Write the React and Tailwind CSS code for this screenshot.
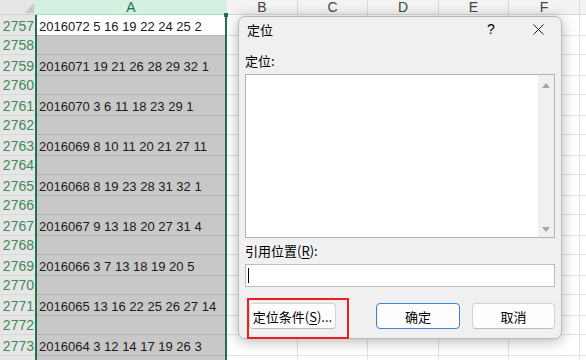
const rows = [
  { n: 2757, t: "2016072 5 16 19 22 24 25 2" },
  { n: 2758 },
  { n: 2759, t: "2016071 19 21 26 28 29 32 1" },
  { n: 2760 },
  { n: 2761, t: "2016070 3 6 11 18 23 29 1" },
  { n: 2762 },
  { n: 2763, t: "2016069 8 10 11 20 21 27 11" },
  { n: 2764 },
  { n: 2765, t: "2016068 8 19 23 28 31 32 1" },
  { n: 2766 },
  { n: 2767, t: "2016067 9 13 18 20 27 31 4" },
  { n: 2768 },
  { n: 2769, t: "2016066 3 7 13 18 19 20 5" },
  { n: 2770 },
  { n: 2771, t: "2016065 13 16 22 25 26 27 14" },
  { n: 2772 },
  { n: 2773, t: "2016064 3 12 14 17 19 26 3" },
  { n: 2774 },
];

const cols = [
  { l: "B", w: "w-[71px]" },
  { l: "C", w: "w-[70px]" },
  { l: "D", w: "w-[71px]" },
  { l: "E", w: "w-[70px]" },
  { l: "F", w: "w-[71px]" },
  { l: "", w: "w-[40px]" },
];

const rh = (r) => (r.t ? "h-[21px]" : "h-[19px]");

export default function App() {
  return (
    <div
      className="relative w-[586px] h-[360px] overflow-hidden bg-white text-[#1a1a1a]"
      style={{ fontFamily: '"Liberation Sans", Arial, sans-serif' }}
    >
      <div className="flex">
        {/* row headers */}
        <div className="flex flex-col w-[35px] shrink-0">
          <div className="relative h-[15px] bg-[#e6e6e6] border-b border-[#d0d0d0]">
            <svg className="absolute right-[1px] bottom-[1px]" width="9" height="10" viewBox="0 0 9 10">
              <polygon points="9,0 9,10 0,10" fill="#c8c8c8" />
            </svg>
          </div>
          {rows.map((r) => (
            <div
              key={r.n}
              className={`${rh(r)} flex items-end justify-end pr-[1px] pb-[1px] bg-[#e6e6e6] border-b border-[#d8d8d8] text-[14px] leading-[16px] text-[#3a8a5c]`}
            >
              {r.n}
            </div>
          ))}
        </div>

        {/* column A */}
        <div className="relative flex flex-col w-[192px] shrink-0">
          <div className="h-[15px] bg-[#d3f0e0] border-b border-[#a9d9bd] text-[#217346] text-[14px] leading-[15px] text-center">
            A
          </div>
          <div className="flex flex-col border-x-2 border-[#217346]">
            {rows.map((r, i) => (
              <div
                key={r.n}
                className={`${rh(r)} ${i === 0 ? "bg-white" : "bg-[#c8c8c8]"} border-b border-[#b4b4b4] flex items-end pl-[2px] pb-[1px] text-[13px] leading-[15px] whitespace-nowrap`}
              >
                {r.t}
              </div>
            ))}
          </div>
          <div className="absolute right-[-1px] top-[13px] w-[4px] h-[4px] bg-[#217346]" />
        </div>

        {/* other columns */}
        {cols.map((c, ci) => (
          <div key={ci} className={`flex flex-col ${c.w} shrink-0`}>
            <div className="h-[15px] bg-[#f3f3f3] border-b border-r border-[#d9d9d9] text-[#444] text-[14px] leading-[15px] text-center">
              {c.l}
            </div>
            {rows.map((r) => (
              <div key={r.n} className={`${rh(r)} border-b border-r border-[#e1e1e1]`} />
            ))}
          </div>
        ))}
      </div>

      {/* dialog */}
      <div
        className="absolute left-[238px] top-[16px] w-[324px] rounded-[7px] border border-[#b9b9b9] bg-[#f0f0f0] shadow-[0_2px_14px_rgba(0,0,0,0.3)] text-black"
        style={{ fontFamily: '"Noto Sans CJK SC", "Microsoft YaHei", sans-serif' }}
      >
        <div className="flex h-[28px] items-center pb-[3px] pl-[8px] pr-[13px] text-[13px]">
          <span className="flex-1">定位</span>
          <span
            className="w-[20px] text-center text-[14px]"
            style={{ fontFamily: '"Liberation Sans", Arial, sans-serif' }}
          >
            ?
          </span>
          <span className="ml-[27px] w-[20px] flex justify-center">
            <svg width="11" height="11" viewBox="0 0 11 11">
              <path d="M0.5 0.5 L10.5 10.5 M10.5 0.5 L0.5 10.5" stroke="#1a1a1a" strokeWidth="1" />
            </svg>
          </span>
        </div>

        <div className="relative flex flex-col px-[6px] pb-[9px]">
          <div className="mt-[7px] h-[18px] leading-[18px] text-[13px]">定位:</div>
          <div className="mt-[4px] h-[164px] flex border border-[#b4b4b4] bg-white">
            <div className="flex-1" />
            <div className="w-[16px] bg-[#f0f0f0] flex flex-col items-center justify-between pt-[8px] pb-[5px]">
              <svg width="8" height="5" viewBox="0 0 8 5">
                <polygon points="4,0 8,5 0,5" fill="#a3a3a3" />
              </svg>
              <svg width="8" height="5" viewBox="0 0 8 5">
                <polygon points="0,0 8,0 4,5" fill="#a3a3a3" />
              </svg>
            </div>
          </div>

          <div className="mt-[4px] h-[18px] leading-[18px] text-[13px]">
            引用位置(<span className="underline underline-offset-2">R</span>):
          </div>
          <div className="mt-[4px] h-[23px] flex items-center border border-[#bdbdbd] bg-white">
            <div className="ml-[2px] w-[1px] h-[15px] bg-black" />
          </div>

          <div className="mt-[16px] flex h-[26px]">
            <button className="ml-[4px] w-[87px] h-[26px] rounded-[4px] border border-[#d3d3d3] border-b-[#bdbdbd] bg-[#fdfdfd] text-[13px] leading-none">
              定位条件(<span className="underline underline-offset-2">S</span>)...
            </button>
            <button className="ml-auto w-[84px] h-[26px] rounded-[4px] border border-[#3b86d4] bg-[#fdfdfd] text-[13px] leading-none">
              确定
            </button>
            <button className="ml-[12px] w-[83px] h-[26px] rounded-[4px] border border-[#d3d3d3] border-b-[#bdbdbd] bg-[#fdfdfd] text-[13px] leading-none">
              取消
            </button>
          </div>
        </div>

        <div className="absolute left-[8px] top-[281px] w-[102px] h-[41px] border-2 border-[#e8201e] pointer-events-none" />
      </div>
    </div>
  );
}
